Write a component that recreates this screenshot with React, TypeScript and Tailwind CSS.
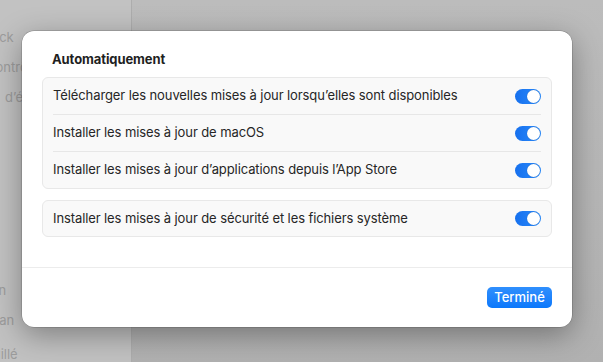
import React from "react";

const rows = [
	"Télécharger les nouvelles mises à jour lorsqu’elles sont disponibles",
	"Installer les mises à jour de macOS",
	"Installer les mises à jour d’applications depuis l’App Store",
];

function Toggle() {
	return (
		<div className="w-[26px] h-[15px] rounded-full bg-gradient-to-r from-[#1670ee] to-[#2b8bfb] flex items-center justify-end px-[1px] shrink-0">
			<div className="w-[13px] h-[13px] rounded-full bg-white shadow-[0_0_1px_rgba(0,0,0,0.3)]" />
		</div>
	);
}

export default function App() {
	return (
		<div
			className="relative w-[603px] h-[362px] overflow-hidden flex text-[13px] text-[#262626]"
			style={{ fontFamily: "Inter, 'Noto Sans', sans-serif" }}
		>
			{/* dimmed window behind the sheet */}
			<aside className="w-[132px] h-full bg-[#c2c2c2] border-r border-[#adadad] text-[#9c9c9c] text-[13px] pt-[28px]">
				<div className="w-[22px] overflow-hidden whitespace-nowrap flex flex-col">
					<div className="h-[30px] leading-[18px] -ml-[18px]">Dock</div>
					<div className="h-[30px] leading-[18px] -ml-[76px]">Centre de contrôle</div>
					<div className="h-[30px] leading-[18px] pl-[5px]">d’écran</div>
				</div>
				<div className="mt-[163px] w-[22px] overflow-hidden whitespace-nowrap flex flex-col">
					<div className="h-[30px] leading-[18px] -ml-[29px]">Écran</div>
					<div className="h-[34px] leading-[18px] -ml-[21px]">Écran</div>
					<div className="h-[30px] leading-[18px] -ml-[78px]">Écran verrouillé</div>
				</div>
			</aside>
			<main className="flex-1 h-full bg-gradient-to-b from-[#bcbcbc] to-[#b1b1b1]" />

			{/* sheet */}
			<div className="absolute left-[22px] top-[31px] w-[550px] h-[296px] bg-white rounded-[12px] shadow-[0_8px_30px_rgba(0,0,0,0.35),0_0_0_0.5px_rgba(0,0,0,0.25)] flex flex-col tracking-[-0.1px]">
				<div className="px-5 pt-5 pb-[30px]">
					<h2 className="font-bold text-[13px] leading-[17px] mb-[9px] pl-[10px] text-[#1f1f1f]">
						Automatiquement
					</h2>
					<div className="rounded-[6px] border border-[#e8e8e8] bg-[#f9f9f9] px-[10px]">
						{rows.map((label, i) => (
							<div
								key={label}
								className={`flex items-center justify-between h-[36px] ${
									i > 0 ? "border-t border-[#e7e7e7] h-[37px]" : ""
								}`}
							>
								<span>{label}</span>
								<Toggle />
							</div>
						))}
					</div>
					<div className="mt-[11px] rounded-[6px] border border-[#e8e8e8] bg-[#f9f9f9] px-[10px] h-[37px] flex items-center justify-between">
						<span>Installer les mises à jour de sécurité et les fichiers système</span>
						<Toggle />
					</div>
				</div>
				<div className="border-t border-[#ececec] flex-1 flex items-start justify-end px-5 pt-[19px]">
					<button className="h-[21px] w-[65px] rounded-[5px] bg-gradient-to-b from-[#2f8ffd] to-[#0a78fb] text-white text-[13px] font-medium leading-[21px] tracking-normal">
						Terminé
					</button>
				</div>
			</div>
		</div>
	);
}
